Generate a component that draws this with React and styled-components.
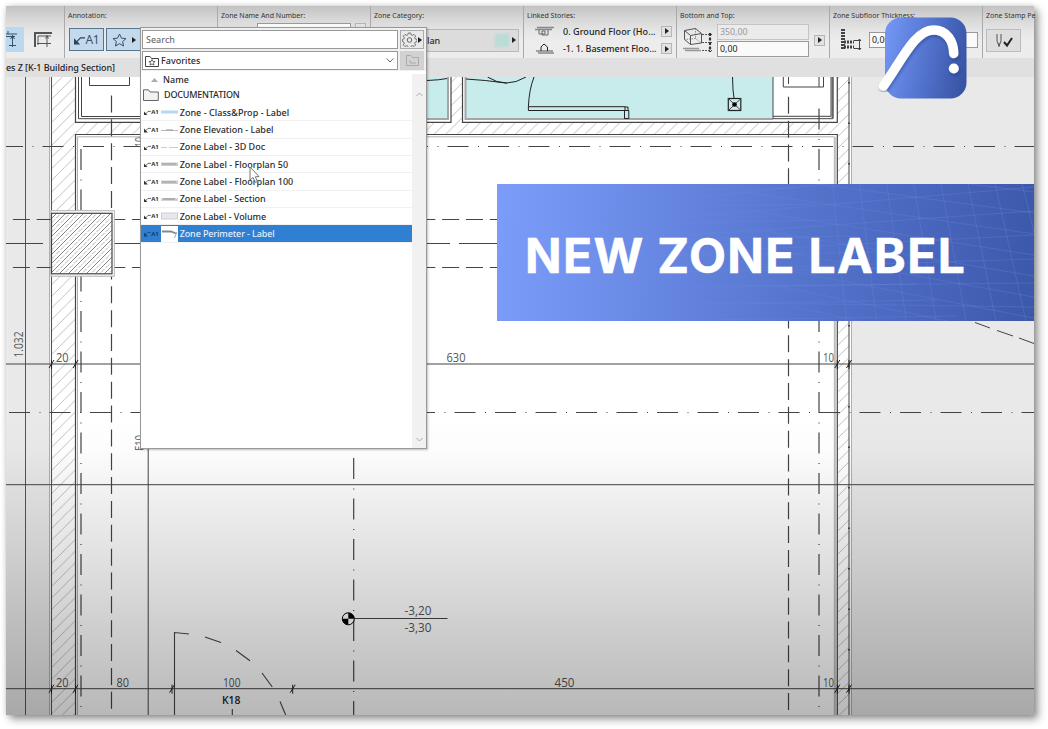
import React from 'react';
import styled, { createGlobalStyle } from 'styled-components';

const GlobalStyle = createGlobalStyle`
  * { box-sizing: border-box; }
  body { margin: 0; background: #fff; overflow: hidden; font-family: "Noto Sans", "Open Sans", sans-serif; color: #2b2b2b; }
  svg { display: block; flex: none; }
`;

const Page = styled.div`
  width: 1048px; height: 729px; padding: 6px; background: #fff; overflow: hidden;
`;
const Frame = styled.main`
  position: relative; width: 1028px; height: 709px; display: flex; flex-direction: column;
  background: #e9e9e9; box-shadow: 4px 4px 8px rgba(0,0,0,.42), 0 0 5px rgba(0,0,0,.14);
`;
const Toolbar = styled.header`
  display: grid; grid-template-columns: 58px repeat(6, 153px) 52px; height: 52px;
  background: linear-gradient(#c2c2c2 0, #d6d6d6 12px, #e7e7e7 26px, #ededed 36px, #ececec);
`;
const Group = styled.section`
  padding: 4px 0 0 ${p => (p.$flush ? 0 : 3)}px; min-width: 0;
  border-left: ${p => (p.$first ? '0' : '1px solid #aaa')};
`;
const GroupLabel = styled.div`
  height: 12px; padding-left: ${p => p.$indent || 0}px; font-size: 7px; line-height: 11px; white-space: nowrap; color: #333;
`;
const Body = styled.div`
  display: flex; align-items: ${p => p.$align || 'center'}; gap: ${p => p.$gap || 0}px;
  height: 36px; padding: ${p => p.$pad || '0'};
`;
const ToolButton = styled.div`
  width: ${p => p.$w}px; height: ${p => p.$h || 23}px; flex: none;
  display: flex; align-items: center; justify-content: center; gap: 5px;
  background: ${p => (p.$active ? '#c3d9ec' : '#dedede')};
  border: 1px solid ${p => (p.$active ? '#587590' : '#bbb')};
`;
const SideButton = styled.div`
  width: 18px; height: 25px; background: #bcd8ee; display: flex; align-items: center;
`;
const Stack = styled.div`display: flex; flex-direction: column; gap: ${p => p.$gap || 0}px;`;
const StoryRow = styled.div`
  display: flex; align-items: center; height: 17.5px; 
  font-size: 9px; font-weight: 500; white-space: nowrap; color: #222; letter-spacing: ${p => p.$ls || 0}px;
`;
const StoryName = styled.span`width: 104px; padding-left: 6px;`;
const StoryIcon = styled.div`width: 24px; padding-left: 2px; flex: none;`;
const ArrowButton = styled.div`
  width: 11px; height: 11px; border: 1px solid #b5b5b5; background: #e2e2e2; flex: none;
  display: flex; align-items: center; justify-content: center;
`;
const NumberBox = styled.div`
  width: ${p => p.$w}px; height: ${p => p.$h || 16}px; padding-left: 2px; font-size: 8.8px; line-height: 14px;
  border: 1px solid ${p => (p.$off ? '#c4c4c4' : '#999')}; flex: none;
  background: ${p => (p.$off ? '#ebebeb' : '#fafafa')}; color: ${p => (p.$off ? '#999' : '#222')};
`;
const CategoryButton = styled.div`
  width: 148px; height: 23px; border: 1px solid #b8b8b8; background: #dcdcdc;
  display: flex; align-items: center; justify-content: flex-end; padding-right: 2px; font-size: 9px; font-weight: 500;
`;
const CategoryName = styled.span`width: 68px;`;
const Swatch = styled.i`width: 14px; height: 13px; background: #b9dcd8; margin-right: 3px; filter: blur(.8px);`;
const TabBar = styled.div`
  height: 19px; background: #e0e0e0; flex: none; font-size: 9px; font-weight: 500; line-height: 20px; white-space: nowrap;
  letter-spacing: -0.07px; color: #222;
`;
const Shade = styled.div`
  position: absolute; inset: 410px 0 0 0; pointer-events: none;
  background: linear-gradient(rgba(0,0,0,0) 0, rgba(0,0,0,.012) 35px, rgba(0,0,0,.05) 72px, rgba(0,0,0,.12) 145px, rgba(0,0,0,.2) 220px, rgba(0,0,0,.28) 299px);
`;

const Popup = styled.div`
  position: absolute; left: 134px; top: 21px; width: 287px; height: 422px;
  border: 1px solid #999; background: #f0f0f0; box-shadow: 1px 1px 2px rgba(0,0,0,.25);
  display: flex; flex-direction: column; color: #2a2a2a; font-weight: 500;
`;
const PopupHead = styled.div`
  display: grid; grid-template-columns: 256px 24px; gap: 2px; padding: 2px 1px 0 1px;
`;
const Field = styled.div`
  height: 19px; border: 1px solid #999; background: #fff; display: flex; align-items: center;
  padding: 0 3px 0 ${p => (p.$hint ? 3 : 2)}px; font-size: 9px; gap: 2px; color: ${p => (p.$hint ? '#707070' : '#2a2a2a')};
`;
const FieldText = styled.span`flex: 1;`;
const HeadButton = styled.div`
  height: 19px; border: 1px solid ${p => (p.$off ? '#d0d0d0' : '#aaa')}; background: ${p => (p.$off ? '#d2d2d2' : '#e9e9e9')};
  display: flex; align-items: center; justify-content: center; gap: 1px;
`;
const ListArea = styled.div`flex: 1; display: grid; grid-template-columns: 1fr 14px; margin-top: 1px; background: #fff;`;
const List = styled.div`display: flex; flex-direction: column;`;
const NameHead = styled.div`
  height: 16px; display: flex; align-items: center; gap: 5px; padding-left: 10px; font-size: 9px;
`;
const Folder = styled.div`
  height: 17px; display: flex; align-items: center; gap: 5px; padding: 0 0 2px 2px; font-size: 9px;
  letter-spacing: -0.2px;
`;
const Row = styled.div`
  height: 17.35px; display: flex; align-items: center; padding-left: 3px; font-size: 9px; white-space: nowrap;
  border-bottom: 1px solid #f1f1f1; letter-spacing: ${p => p.$ls || 0}px;
  background: ${p => (p.$on ? '#2f7fd2' : '#fff')}; color: ${p => (p.$on ? '#e5f0fb' : '#2a2a2a')};
`;
const Tag = styled.b`font-size: 6px; width: 7px; letter-spacing: -0.2px; color: ${p => (p.$on ? '#15406f' : '#333')};`;
const Preview = styled.div`
  width: 17px; height: ${p => (p.$on ? 16 : 8)}px; margin: 0 1.5px 0 3px; background: ${p => (p.$on ? '#fff' : 'none')};
  display: flex; align-items: center; flex: none;
`;
const Scroll = styled.div`
  background: #f1f1f1; display: flex; flex-direction: column; justify-content: space-between; align-items: center;
  padding: 18px 0 6px; margin-top: 3px;
`;

const Banner = styled.div`
  position: absolute; left: 491px; top: 178px; width: 537px; height: 137px; overflow: hidden;
  background: linear-gradient(93deg, #7b9df9 0, #7293ef 14%, #6484df 34%, #5473cb 58%, #4967bf 78%, #3c58aa 100%);
  display: flex; align-items: center;
`;
const Mesh = styled.svg`position: absolute; left: 0; top: 0;`;
const Title = styled.h1`
  position: relative; margin: 6px 0 0 28px; font: 700 48px/60px Inter, sans-serif; color: #fff; white-space: nowrap;
  letter-spacing: 1.35px; -webkit-text-stroke: .5px #fff;
`;
const Logo = styled.svg`position: absolute; left: 870px; top: 7px;`;
const Cursor = styled.svg`position: absolute; left: 243px; top: 160px;`;

const Arrow = ({ c = '#222' }) => <svg width="4" height="6"><path d="M0 0L4 3L0 6Z" fill={c} /></svg>;
const Leader = ({ s = 1, c = '#333' }) => (
  <svg width={9 * s} height={8 * s} viewBox="0 0 9 8"><path d="M2 6L5 3H9" fill="none" stroke={c} strokeWidth=".9" /><path d="M0 3.2V8H4.8Z" fill={c} /></svg>
);
const A1 = styled.span`font-size: 12px; color: #3d5367; margin-left: -5px; letter-spacing: -.3px;`;

const items = [
  ['Zone - Class&Prop - Label', 'blue', 0.04],
  ['Zone Elevation - Label', 'line', 0],
  ['Zone Label - 3D Doc', 'faint', 0.02],
  ['Zone Label - Floorplan 50', 'bar', 0.02],
  ['Zone Label - Floorplan 100', 'bar', 0.02],
  ['Zone Label - Section', 'dark', 0],
  ['Zone Label - Volume', 'box', -0.03],
  ['Zone Perimeter - Label', 'on', -0.12],
];

function PreviewArt({ kind }) {
  return (
    <svg width="17" height="8">
      {kind === 'blue' && <rect y="2.5" width="17" height="3" fill="#b9d7f3" />}
      {kind === 'line' && <><path d="M0 4.500H17" stroke="#bbb" /><path d="M5 4H12" stroke="#999" /></>}
      {kind === 'faint' && <path d="M0 4.500H6M8 4.500H17" stroke="#ccc" />}
      {kind === 'bar' && <><rect y="2.5" width="17" height="3.5" fill="#ccc" /><path d="M1 4H15" stroke="#999" /></>}
      {kind === 'dark' && <><rect y="3" width="17" height="3" fill="#d4d4d4" /><path d="M2 4H14" stroke="#888" /></>}
      {kind === 'box' && <rect x=".5" y="1" width="16" height="6" fill="#e6e8ee" stroke="#cdcfd5" />}
      {kind === 'on' && <><path d="M1 1.5H10L15 3.500" stroke="#888" strokeWidth="1.800" fill="none" /><path d="M16 2L13.500 8" stroke="#aaa" /></>}
    </svg>
  );
}

const Dim = ({ x, y, w, children, size = 12, ...r }) => (
  <text x={x} y={y} fontSize={size} textLength={w} lengthAdjust="spacingAndGlyphs" fill="#555" stroke="none" {...r}>{children}</text>
);
const Tick = ({ x, y }) => <path d={`M${x - 2.5} ${y + 4}L${x + 2.5} ${y - 4}M${x} ${y - 4}V${y + 5}`} stroke="#222" strokeWidth="1" />;

const DASH = '17 6.85';
const DOT = '21 9.5 1 9';

function Plan() {
  return (
    <svg width="1028" height="638" viewBox="6 77 1028 638" fontFamily="Open Sans, Noto Sans, sans-serif" fill="none" stroke="#444" strokeWidth="1">
      <defs>
        <pattern id="hatch" width="11.6" height="11.6" patternUnits="userSpaceOnUse">
          <path d="M-1 12.6L12.6 -1" stroke="#b0b0b0" strokeWidth=".8" />
        </pattern>
        <pattern id="dense" width="9" height="9" patternUnits="userSpaceOnUse">
          <path d="M-1 10L10 -1" stroke="#666" strokeWidth=".8" />
          <path d="M-1 5.500L5.500 -1M3.500 10L10 3.500" stroke="#888" strokeWidth=".7" strokeDasharray="3 1.5" />
        </pattern>
      </defs>
      <rect x="49" y="77" width="802" height="638" fill="#fff" stroke="none" />
      <path fill="url(#hatch)" stroke="none" d="M51 77H75.5V122.5H451V77H462.5V122.5H837.5V77H849V715H837.5V134.5H75.5V715H51Z" />
      <path d="M49.5 77V715M851.5 77V715" stroke="#b0b0b0" />
      <path d="M834.8 137V715" stroke="#bdbdbd" strokeWidth="2" />
      <path d="M51.5 77V715M849 77V715" stroke="#555" strokeWidth="1.1" />
      <path d="M75.5 213V134.5H837.3V715M75.5 274V715" strokeWidth="1.2" />
      <path d="M77.5 211V136.8H834.5M77.5 277V715" stroke="#b0b0b0" />

      <rect x="427" y="77" width="20.5" height="41" fill="#c8ebeb" stroke="none" />
      <rect x="465.5" y="77" width="307.5" height="41" fill="#c8ebeb" stroke="none" />
      <path d="M75.5 77V122.3H451V77M462.5 77V122.3H837.3V77" strokeWidth="1.2" />
      <path d="M78.5 77V118.7H141M81.5 77V116.5H141" />
      <path d="M427 119H448V77M465.5 77V119H773" stroke="#a5a5a5" strokeWidth="2" />
      <path d="M773 77V118.7H833V77M773 116.3H831V77" />
      <path d="M832.5 77V118" stroke="#666" strokeWidth="2" />
      <path d="M89.5 77V85.5H129.5V77M783.3 77V87H823.5V77" />
      <path d="M427 80.5Q440 80 447 78.5M466 79Q485 80 507 83.2M487.5 77Q506 89 526 77M534 77Q529 90 528.4 106.7H625V110.5H528.4V106.7M624.5 110.5H628.8V118.5H624.5ZM625 107H628V111M732.5 77L733 90L734 98" stroke="#222" />
      <rect x="728.3" y="98.5" width="12.5" height="12" stroke="#222" strokeWidth="1.2" />
      <path d="M728.3 98.5L741 110.5M741 98.5L728.3 110.5" stroke="#444" />
      <circle cx="734.5" cy="104.5" r="2.3" fill="#000" stroke="none" />

      <path d="M25.5 77V715" stroke="#555" />
      <path d="M6 364H1034M6 484.7H1034M6 688.7H1034" />
      <path d="M148.2 448V715" />
      <path d="M111.5 95.5V715" strokeDasharray={DASH} strokeWidth="1.2" />
      <path d="M788.5 96.8V715" strokeDasharray={DASH} strokeWidth="1.2" />
      <path d="M81 149V715M819 108.5V715" strokeDasharray={DOT} strokeWidth="1.2" />
      <path d="M788.5 77V84M819 77V87" />
      <path d="M849 82V715" strokeDasharray="1.5 39" strokeWidth="2" />
      <path d="M353.7 458V715" strokeDasharray={DOT} strokeWidth="1.2" />
      <path d="M2 146.5H1034M9 412.5H1034" strokeDasharray={DOT} />
      <path d="M-11 219.5H497M-11 267.5H497" strokeDasharray={DASH} />
      <path d="M6 243.5H43M51 243.5H141M427 243.5H450M459 243.5H497" />

      <rect x="51" y="210.7" width="63.3" height="65.5" fill="#fff" stroke="#b0b0b0" />
      <rect x="51.5" y="213.3" width="60.5" height="60.5" fill="url(#dense)" stroke="#444" strokeWidth="1.2" />

      <path d="M975 322.5L990 328M997 330.5L1013 336M1019 338L1034 343.5" />
      <path d="M174.5 715V632.5L189 634M205 637L221 642.6M236 650.5L250 660.7M262 673L272.3 687M280 701.5L285.7 715M232.3 709V715" strokeWidth="1.1" />
      <path d="M353 618.5H447.5" strokeWidth="1.1" />
      <circle cx="348.3" cy="618.8" r="6" fill="#fff" fillOpacity=".7" stroke="#000" />
      <path d="M348.3 618.8V612.8A6 6 0 0 1 354.3 618.8ZM348.3 618.8V624.8A6 6 0 0 1 342.3 618.8Z" fill="#000" stroke="none" />

      {[[51.5, 364], [75.5, 364], [837.3, 364], [849, 364], [51.5, 688.7], [75.5, 688.7], [172, 688.7], [292.7, 688.7], [837.3, 688.7], [849, 688.7]].map(([x, y]) => <Tick key={`${x}-${y}`} x={x} y={y} />)}
      <Dim x="56" y="361.5" w="12.5">20</Dim>
      <Dim x="446.5" y="361.5" w="19">630</Dim>
      <Dim x="823" y="361.5" w="11">10</Dim>
      <Dim x="56" y="686.7" w="12.5">20</Dim>
      <Dim x="116.5" y="686.7" w="12.5">80</Dim>
      <Dim x="223" y="686.7" w="17.5">100</Dim>
      <Dim x="222" y="703.5" w="18.5" size={10.5} fill="#222" fontWeight="600">K18</Dim>
      <Dim x="554.5" y="686.7" w="20">450</Dim>
      <Dim x="823" y="686.7" w="11">10</Dim>
      <Dim x="404.5" y="614.5" w="27">-3,20</Dim>
      <Dim x="404.5" y="632" w="27">-3,30</Dim>
      <Dim x="0" y="0" w="26" transform="translate(23 357.5) rotate(-90)">1.032</Dim>
      <Dim x="0" y="0" w="16" size={10} transform="translate(143 451) rotate(-90)">E10</Dim>
      <Dim x="0" y="0" w="10" size={10} transform="translate(143 147) rotate(-90)">10</Dim>
    </svg>
  );
}

function MeshLines() {
  const lines = [];
  for (let i = 0; i < 9; i++) {
    lines.push(`M${150 + i * 14} ${i * 17}L537 ${i * 24 - 45}`);
    lines.push(`M${230 + i * 8} ${i * 19 - 30}L537 ${i * 21 + 8}`);
    lines.push(`M${335 + i * 27} -5L${350 + i * 30} 142`);
    lines.push(`M${20 + i * 15} ${i * 16 + 9}L${300 + i * 20} ${i * 16 + 4}`);
  }
  return (
    <Mesh width="537" height="137">
      <defs><linearGradient id="fade" gradientUnits="userSpaceOnUse" x1="0" y1="0" x2="537" y2="0"><stop offset=".1" stopColor="#9fb9ff" stopOpacity="0" /><stop offset="1" stopColor="#9fb9ff" stopOpacity=".15" /></linearGradient></defs>
      <path d={lines.join('')} fill="none" stroke="url(#fade)" strokeWidth="1" />
    </Mesh>
  );
}

export default function App() {
  return (
    <Page>
      <GlobalStyle />
      <Frame>
        <Toolbar>
          <Group $first $flush>
            <GroupLabel />
            <Body $gap={9} $pad="0 0 1px">
              <SideButton>
                <svg width="12" height="20" fill="none" stroke="#34536e"><path d="M0 4H11M0 6.5H9M6.5 5V17M3 15.5H10M4.5 9L6.5 6L8.5 9M2 1V4" /></svg>
              </SideButton>
              <svg width="20" height="19" fill="none" stroke="#555"><path d="M2 17V3H19" strokeWidth="2" /><path d="M5 15V6H18M14 5V17M4 13.5H18M12.5 8.5L14 6L15.5 8.5" /></svg>
            </Body>
          </Group>
          <Group>
            <GroupLabel>Annotation:</GroupLabel>
            <Body $gap={2} $pad="0 0 1px 1px">
              <ToolButton $active $w={35}><Leader s={1.3} c="#29445c" /><A1>A1</A1></ToolButton>
              <ToolButton $active $w={36}>
                <svg width="15" height="14" viewBox="0 0 15 14"><path d="M7.5 1L9.5 5.2L14 5.6L10.6 8.6L11.6 13L7.5 10.7L3.4 13L4.4 8.6L1 5.6L5.5 5.2Z" fill="none" stroke="#34536e" /></svg>
                <Arrow />
              </ToolButton>
            </Body>
          </Group>
          <Group>
            <GroupLabel>Zone Name And Number:</GroupLabel>
            <Body $align="flex-start" $gap={4} $pad="1px 0 0 36px"><NumberBox $w={94} /><ArrowButton /></Body>
          </Group>
          <Group $flush>
            <GroupLabel $indent={3}>Zone Category:</GroupLabel>
            <Body><CategoryButton><CategoryName>lan</CategoryName><Swatch /><Arrow /></CategoryButton></Body>
          </Group>
          <Group>
            <GroupLabel>Linked Stories:</GroupLabel>
            <Body $pad="0 0 0 6px">
              <Stack>
                <StoryRow $ls={0.05}>
                  <StoryIcon><svg width="19" height="11" fill="none" stroke="#666"><path d="M2 1.5H19M0 3.5H17" strokeWidth="1.4" stroke="#888" /><path d="M4 4V8H10V5H7V9H13V4" /></svg></StoryIcon>
                  <StoryName>0. Ground Floor (Ho...</StoryName><ArrowButton><Arrow /></ArrowButton>
                </StoryRow>
                <StoryRow $ls={-0.02}>
                  <StoryIcon><svg width="19" height="11" fill="none" stroke="#666"><path d="M1 8H18M3 10H19" strokeWidth="1.3" stroke="#888" /><path d="M6 8V4L9 1L12.500 4V8" stroke="#222" /></svg></StoryIcon>
                  <StoryName>-1. 1. Basement Floo...</StoryName><ArrowButton><Arrow /></ArrowButton>
                </StoryRow>
              </Stack>
            </Body>
          </Group>
          <Group>
            <GroupLabel>Bottom and Top:</GroupLabel>
            <Body $gap={5} $pad="0 0 0 2px">
              <svg width="30" height="26" fill="none" stroke="#555"><path d="M2.500 3.500L13.500 1.500L19.500 6.500V16L8.500 17.500L2.500 12.500ZM2.500 3.500L8.500 8.500L19.500 6.500M8.500 8.500V17.500" /><path d="M13.500 1.500V11.500L19 16M13.500 11.500L3 12.500" strokeWidth=".6" strokeDasharray="1.500 1" /><path d="M1 21.500H17M3 23.500H19" stroke="#999" strokeWidth="1.5" /><path d="M20 7.500H30M20 15.500H30M20 23.500H30" strokeDasharray="2 1" /><path d="M28 6V25" strokeDasharray="3 1.500" strokeWidth="2.200" stroke="#333" /></svg>
              <Stack $gap={1}><NumberBox $w={92} $off>350,00</NumberBox><NumberBox $w={92}>0,00</NumberBox></Stack>
              <ArrowButton><Arrow /></ArrowButton>
            </Body>
          </Group>
          <Group>
            <GroupLabel>Zone Subfloor Thickness:</GroupLabel>
            <Body $gap={7} $pad="0 0 0 7px">
              <svg width="22" height="22" fill="none" stroke="#444"><path d="M3 0V20" strokeWidth="4" strokeDasharray="2 1" /><path d="M4 13H14M4 18H14" strokeWidth="3" strokeDasharray="2 1" /><path d="M14 11.500H21M14 19.500H21M19.500 10V21M18 12L19.500 10L21 12M18 19L19.500 21L21 19" /></svg>
              <NumberBox $w={109}>0,00</NumberBox>
            </Body>
          </Group>
          <Group>
            <GroupLabel>Zone Stamp Pe</GroupLabel>
            <Body><ToolButton $w={35}><svg width="18" height="15" fill="none" stroke="#555"><path d="M2 1V8L4 13L6 8V1M4 10V14" /><path d="M9 9L12 12.500L17 5" strokeWidth="2" stroke="#222" /></svg></ToolButton></Body>
          </Group>
        </Toolbar>
        <TabBar>es Z [K-1 Building Section]</TabBar>
        <Plan />
        <Shade />
        <Popup>
          <PopupHead>
            <Field $hint><FieldText>Search</FieldText></Field>
            <HeadButton>
              <svg width="15" height="15" viewBox="0 0 15 15" fill="none" stroke="#666"><path d="M6.300 1h2.400l.4 1.800 1.300.6 1.600-1 1.700 1.700-1 1.600.5 1.300 1.800.4v2.200l-1.800.4-.5 1.300 1 1.600-1.700 1.700-1.600-1-1.300.6-.4 1.800H6.300l-.4-1.800-1.300-.6-1.600 1-1.700-1.700 1-1.600-.5-1.300L.5 9.600V7.400L1.800 7l.5-1.300-1-1.600L3 2.400l1.600 1 1.300-.6Z" strokeWidth=".9" /><circle cx="7.500" cy="8" r="2.300" /></svg>
              <Arrow />
            </HeadButton>
            <Field>
              <svg width="14" height="12" fill="none" stroke="#444"><path d="M.5 11.500V1.500H5L6.500 3.500H13.500V11.500Z" /><path d="M7 4.500L8 6.500H10L8.500 8L9 10L7 9L5 10L5.500 8L4 6.500H6Z" strokeWidth=".8" /></svg>
              <FieldText>Favorites</FieldText>
              <svg width="8" height="5" fill="none" stroke="#666"><path d="M.7.5L4 4L7.300.5" /></svg>
            </Field>
            <HeadButton $off><svg width="13" height="11" fill="none" stroke="#aaa"><path d="M.5 10.500V.5H5L6.500 2.500H12.500V10.500ZM4 5V8H10" /></svg></HeadButton>
          </PopupHead>
          <ListArea>
            <List>
              <NameHead><svg width="7" height="5"><path d="M0 5L3.500 1L7 5Z" fill="#aaa" /></svg>Name</NameHead>
              <Folder><svg width="16" height="12" fill="#f2f2f2" stroke="#666"><path d="M.5 11.500V.8H5.500L7 3H15.300V11.500Z" /></svg>DOCUMENTATION</Folder>
              {items.map(([t, k, ls]) => {
                const on = k === 'on';
                return (
                  <Row key={t} $on={on} $ls={ls}>
                    <Leader s={0.8} c={on ? '#15406f' : '#333'} /><Tag $on={on}>A1</Tag>
                    <Preview $on={on}><PreviewArt kind={k} /></Preview>{t}
                  </Row>
                );
              })}
            </List>
            <Scroll>
              <svg width="7" height="5" fill="none" stroke="#aaa"><path d="M.5 4L3.500 1L6.500 4" /></svg>
              <svg width="7" height="5" fill="none" stroke="#aaa"><path d="M.5 1L3.500 4L6.500 1" /></svg>
            </Scroll>
          </ListArea>
        </Popup>
        <Banner><MeshLines /><Title>NEW ZONE LABEL</Title></Banner>
        <Logo width="100" height="95" viewBox="876 13 100 95">
          <defs>
            <linearGradient id="tile" x1="0" y1=".4" x2="1" y2=".6"><stop stopColor="#7194f2" /><stop offset=".5" stopColor="#5373ce" /><stop offset="1" stopColor="#3854a4" /></linearGradient>
            <filter id="soft"><feDropShadow dx="1" dy="2" stdDeviation="1.500" floodColor="#1d3270" floodOpacity=".45" /></filter>
          </defs>
          <rect x="885" y="17.500" width="81.500" height="81" rx="16" fill="url(#tile)" />
          <g filter="url(#soft)">
            <path d="M883.500 86C902 60 915 30 933.500 30C947 30 953.500 41 953.700 53.500" fill="none" stroke="#fff" strokeWidth="9.500" strokeLinecap="round" />
            <circle cx="953.800" cy="68.500" r="5" fill="#fff" />
          </g>
        </Logo>
        <Cursor width="11" height="18" viewBox="0 0 11 18"><path d="M1 1V14L4 11.500L6.500 16.500L8.500 15.500L6.300 10.800L10 10.500Z" fill="#fff" fillOpacity=".8" stroke="#777" /></Cursor>
      </Frame>
    </Page>
  );
}
